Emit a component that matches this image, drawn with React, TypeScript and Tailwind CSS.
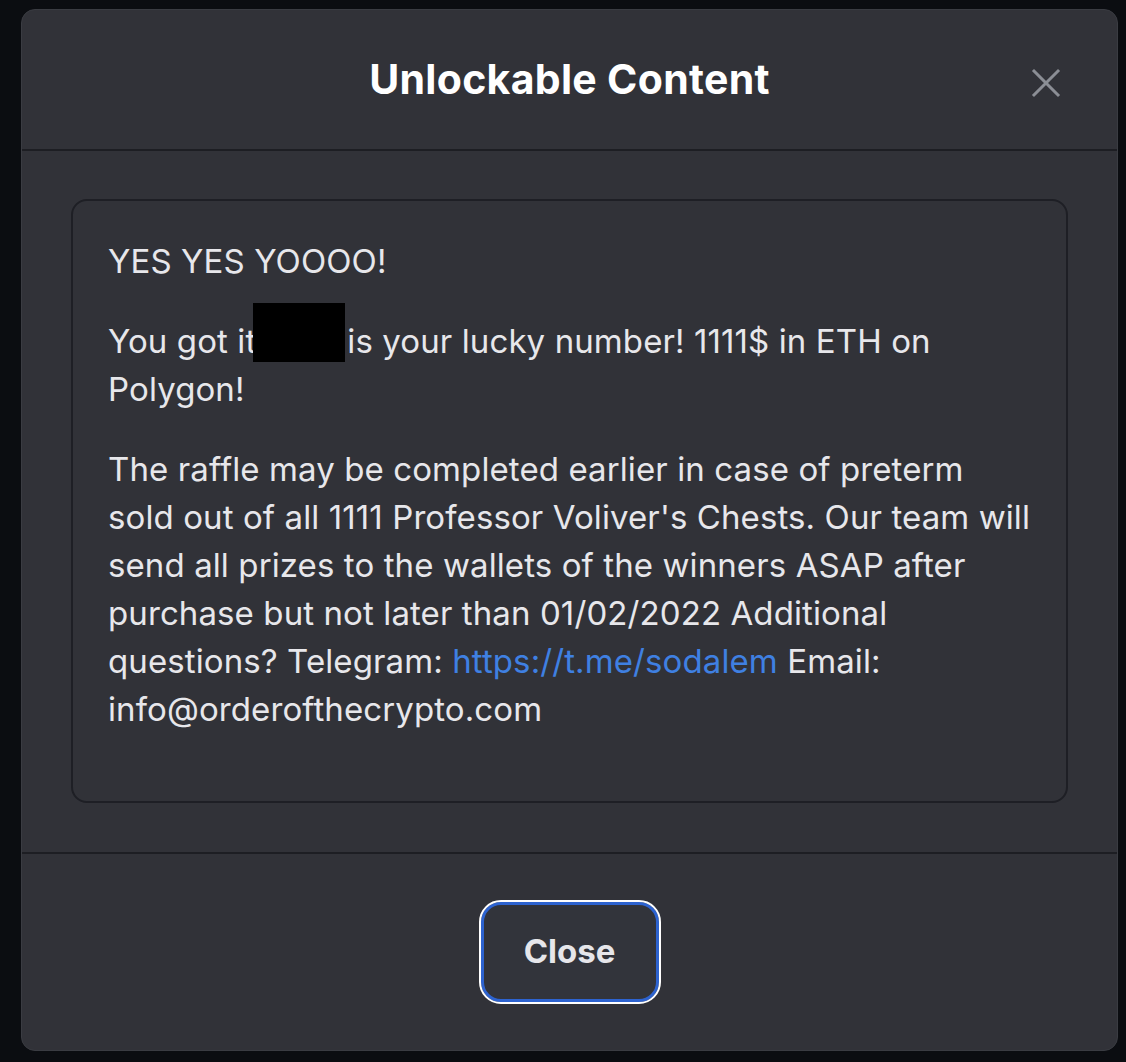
import React from 'react';

const font = { fontFamily: 'Inter, "Noto Sans", sans-serif' };

function CloseIcon() {
  return (
    <svg width="30" height="30" viewBox="0 0 30 30" fill="none" className="text-[#8b8e95]">
      <path d="M3 3L27 27M27 3L3 27" stroke="currentColor" strokeWidth="3" strokeLinecap="square" />
    </svg>
  );
}

export default function App() {
  return (
    <div className="min-h-[1062px] w-full bg-[#0b0d11] pt-[9px] pl-[21px]" style={font}>
      <div className="w-[1097px] h-[1042px] rounded-[14px] bg-[#313238] border border-[#3a3c42] flex flex-col overflow-hidden">
        {/* header */}
        <div className="h-[141px] relative flex items-center justify-center border-b-2 border-[#1d1e23]">
          <h2 className="text-[41px] font-bold text-white tracking-[0.3px]">Unlockable Content</h2>
          <button className="absolute right-[56px] top-[58px]">
            <CloseIcon />
          </button>
        </div>

        {/* body */}
        <div className="px-[49px] pt-[48px] pb-[49px] border-b-2 border-[#1d1e23]">
          <div className="rounded-[16px] border-2 border-[#1e1f25] px-[35px] pt-[36px] pb-[36px] text-[33px] leading-[48px] tracking-[0.1px] text-[#e7e7eb] whitespace-nowrap">
            <p className="mb-[32px]">YES YES YOOOO!</p>
            <p className="mb-[32px]">
              You got it
              <span className="inline-block align-top w-[92px] h-[59px] bg-black -mt-[14px] -ml-[3px] mr-[2px]" />
              is your lucky number! 1111$ in ETH on
              <br />
              Polygon!
            </p>
            <p className="mb-[32px]">
              The raffle may be completed earlier in case of preterm
              <br />
              sold out of all 1111 Professor Voliver's Chests. Our team will
              <br />
              send all prizes to the wallets of the winners ASAP after
              <br />
              purchase but not later than 01/02/2022 Additional
              <br />
              questions? Telegram: <a className="text-[#3f80e2]">https://t.me/sodalem</a> Email:
              <br />
              info@orderofthecrypto.com
            </p>
          </div>
        </div>

        {/* footer */}
        <div className="flex-1 flex items-center justify-center">
          <button className="w-[178px] h-[100px] rounded-[20px] bg-[#32343b] border-[3px] border-[#2d63d0] outline outline-2 outline-white text-[33px] font-bold text-[#e6e6ea]">
            Close
          </button>
        </div>
      </div>
    </div>
  );
}
